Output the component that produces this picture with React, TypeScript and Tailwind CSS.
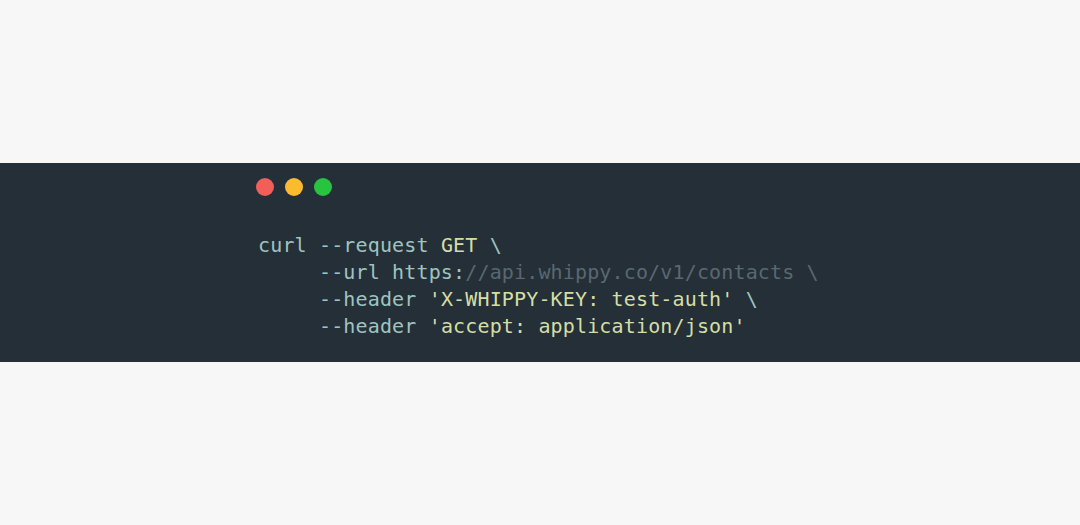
import React from 'react';

const teal = 'text-[#9fc4c0]';
const str = 'text-[#d5dea4]';
const dim = 'text-[#5a6870]';

export default function App() {
  return (
    <div className="flex h-screen w-full items-center bg-[#f7f7f7]">
      <div className="w-full h-[199px] bg-[#242f38] pl-[256px] pt-[15px]">
        <div className="flex gap-[11px]">
          <span className="block w-[18px] h-[18px] rounded-full bg-[#f25f58]" />
          <span className="block w-[18px] h-[18px] rounded-full bg-[#fbbb2e]" />
          <span className="block w-[18px] h-[18px] rounded-full bg-[#29c43f]" />
        </div>
        <pre
          className="mt-[36px] ml-[2px] text-[20px] leading-[27px] tracking-[0.15px] whitespace-pre"
          style={{ fontFamily: '"DejaVu Sans Mono", "Liberation Mono", monospace' }}
        >
          <div>
            <span className={teal}>curl --request </span>
            <span className={str}>GET</span>
            <span className={teal}> \</span>
          </div>
          <div>
            <span className={teal}>     --url https:</span>
            <span className={dim}>//api.whippy.co/v1/contacts \</span>
          </div>
          <div>
            <span className={teal}>     --header </span>
            <span className={str}>'X-WHIPPY-KEY: test-auth'</span>
            <span className={teal}> \</span>
          </div>
          <div>
            <span className={teal}>     --header </span>
            <span className={str}>'accept: application/json'</span>
          </div>
        </pre>
      </div>
    </div>
  );
}
